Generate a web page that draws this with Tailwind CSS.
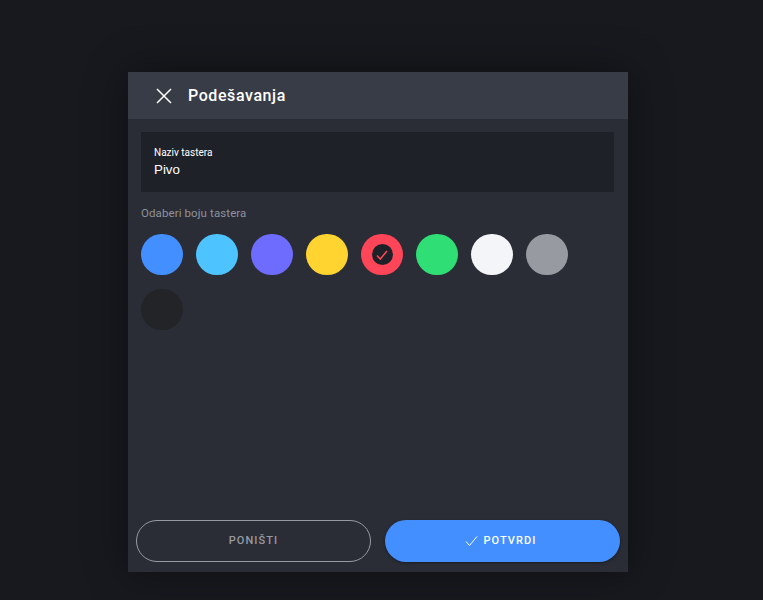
<!DOCTYPE html>
<html>
<head>
<meta charset="utf-8">
<script src="https://cdn.jsdelivr.net/npm/@tailwindcss/browser@4"></script>
</head>
<body class="bg-[#17191e] font-['Roboto',sans-serif] h-[600px] w-full overflow-hidden">
<div class="flex h-[600px] items-start pl-[128px] pt-[72px]">
  <div class="flex h-[500px] w-[500px] flex-col bg-[#2a2d36] shadow-[0_0_40px_rgba(0,0,0,0.4)]">
    <div class="flex h-[47px] shrink-0 items-center bg-[#383c47] pl-[28px]">
      <svg class="h-4 w-4" viewBox="0 0 16 16" fill="none" stroke="white" stroke-width="1.5"><path d="M1 1 15 15M15 1 1 15"/></svg>
      <span class="ml-[16px] text-[16px] font-[480] tracking-[0.58px] text-white">Podešavanja</span>
    </div>
    <div class="flex flex-1 flex-col pl-[13px] pr-[14px] pt-[13px]">
      <div class="flex h-[60px] flex-col justify-center bg-[#1f2129] px-[13px] pt-[2px]">
        <span class="text-[10px] leading-[13px] text-white">Naziv tastera</span>
        <span class="mt-[1px] font-['Liberation_Sans',sans-serif] text-[13.33px] leading-[20px] text-white">Pivo</span>
      </div>
      <p class="mt-[14px] text-[11.5px] leading-[14px] tracking-[0.1px] text-[#8f929b]">Odaberi boju tastera</p>
      <div class="mt-[14px] flex flex-wrap gap-x-[13px] gap-y-[14px]">
        <div class="h-[41px] w-[42px] rounded-full bg-[#448fff]"></div>
        <div class="h-[41px] w-[42px] rounded-full bg-[#4dc4ff]"></div>
        <div class="h-[41px] w-[42px] rounded-full bg-[#6e6bff]"></div>
        <div class="h-[41px] w-[42px] rounded-full bg-[#ffd430]"></div>
        <div class="flex h-[41px] w-[42px] items-center justify-center rounded-full bg-[#ff4558]">
          <div class="flex h-[21px] w-[21px] items-center justify-center rounded-full bg-[#1f2129]">
            <svg class="h-3 w-3" viewBox="0 0 12 12" fill="none" stroke="#ff4558" stroke-width="1.5"><path d="M1 6.5 4.3 10 11 2"/></svg>
          </div>
        </div>
        <div class="h-[41px] w-[42px] rounded-full bg-[#2fdf75]"></div>
        <div class="h-[41px] w-[42px] rounded-full bg-[#f4f5f8]"></div>
        <div class="h-[41px] w-[42px] rounded-full bg-[#989aa2]"></div>
        <div class="h-[41px] w-[42px] rounded-full bg-[#222428]"></div>
      </div>
    </div>
    <div class="flex gap-[14px] px-[8px] pb-[10px]">
      <button class="flex h-[42px] w-[235px] items-center justify-center rounded-full border border-[#989aa2] text-[11px] font-[480] tracking-[1.08px] text-[#989aa2]">PONIŠTI</button>
      <button class="flex h-[42px] w-[235px] items-center justify-center gap-[5px] rounded-full bg-[#448fff] pr-[3px] text-[11px] font-[480] tracking-[1.08px] text-white shadow-[0_1px_3px_rgba(0,0,0,0.4)]">
        <svg class="h-[12px] w-[13px]" viewBox="0 0 13 12" fill="none" stroke="white" stroke-width="1"><path d="M1 6.5 4.5 10.5 12 1.5"/></svg>
        POTVRDI
      </button>
    </div>
  </div>
</div>
</body>
</html>
